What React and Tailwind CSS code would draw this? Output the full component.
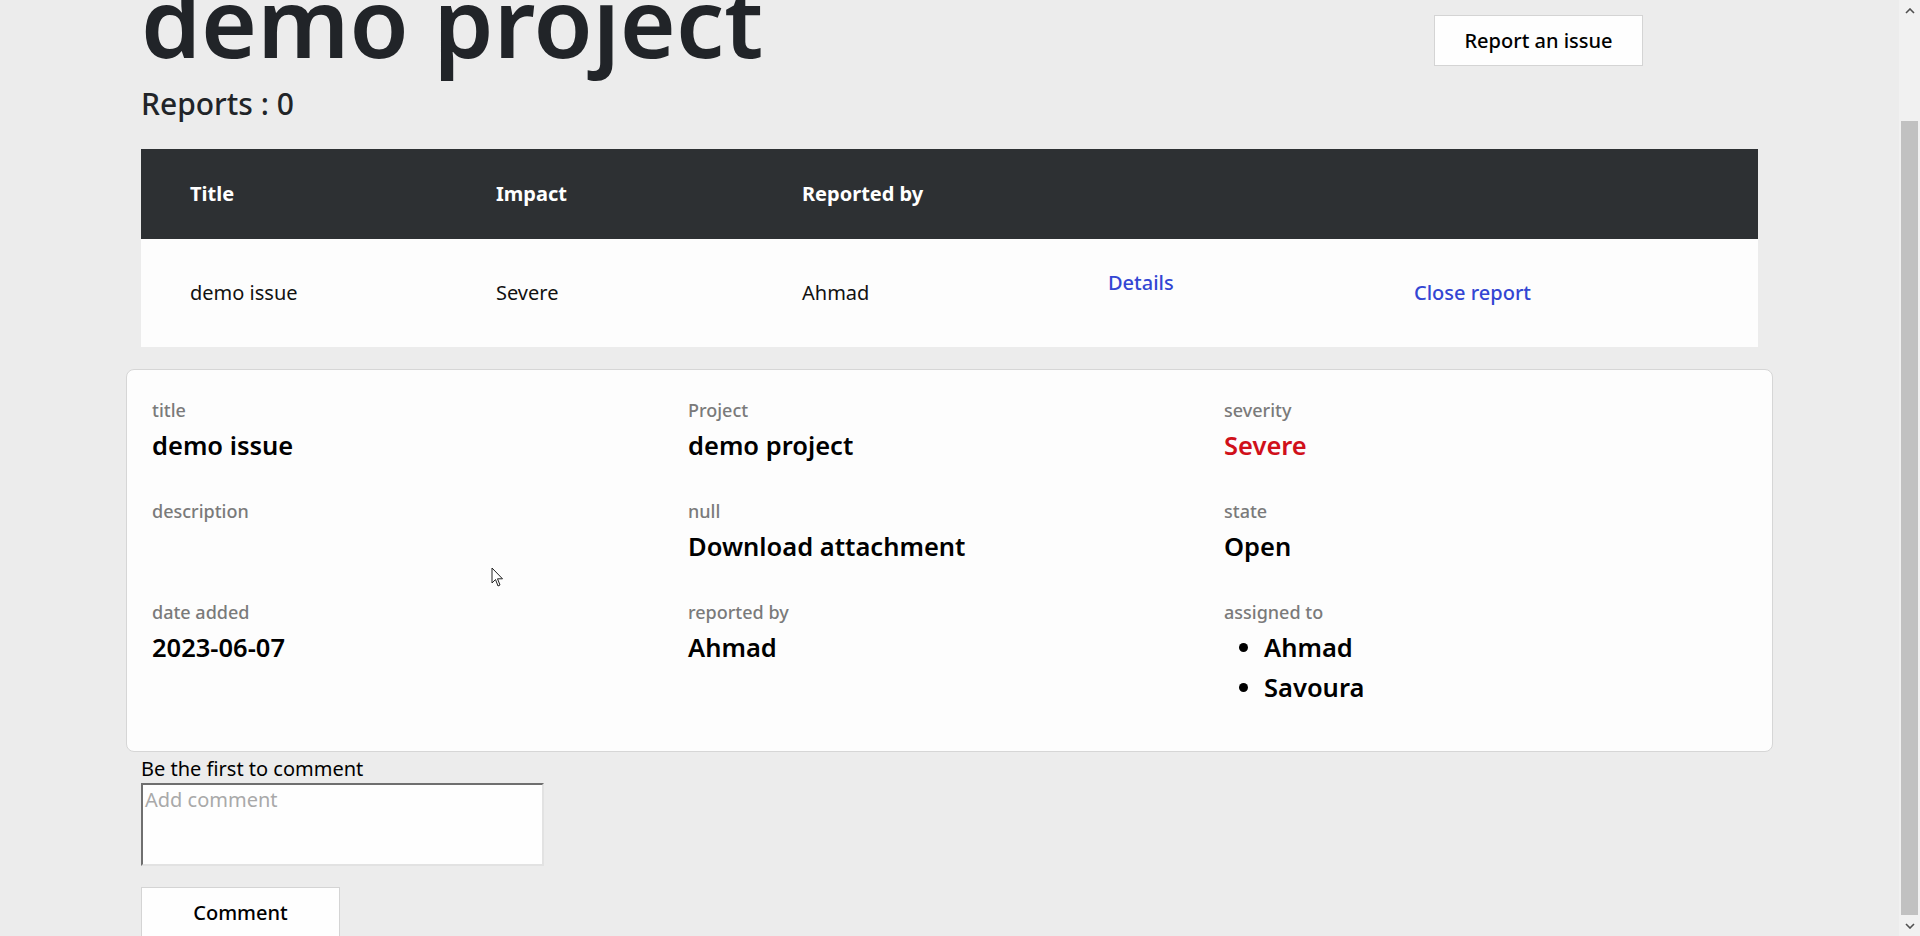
import React from "react";

const reports = [
  { title: "demo issue", impact: "Severe", reporter: "Ahmad" },
];

const Field = ({ label, children }) => (
  <div className="flex flex-col">
    <p className="text-[18px] leading-[27px] font-medium text-[#7a7a7a]">{label}</p>
    <div className="mt-[5px]">{children}</div>
  </div>
);

const Value = ({ children, color = "text-black" }) => (
  <p className={"text-[25.5px] leading-[32px] font-semibold " + color}>{children}</p>
);

const App = () => {
  return (
    <div
      className="flex h-[936px] overflow-hidden bg-[#ececec]"
      style={{ fontFamily: '"Noto Sans", "Open Sans", sans-serif' }}
    >
      <main className="flex-1 px-[141px] text-[#1f2328]">
        {/* Header */}
        <div className="flex items-start justify-between -mt-[24px]">
          <div className="flex flex-col">
            <h1 className="text-[96px] leading-[90px] font-semibold text-[#212428]">demo project</h1>
            <h2 className="mt-[20px] text-[30px] leading-[36px] font-medium text-[#212428]">Reports : 0</h2>
          </div>
          <button className="mt-[39px] mr-[115px] w-[209px] h-[51px] bg-[#fefefe] border border-[#d4d4d4] text-[20px] font-medium text-black">
            Report an issue
          </button>
        </div>

        {/* Reports table */}
        <div className="mt-[27px]">
          <div className="grid grid-cols-5 h-[90px] items-center pl-[49px] pr-[38px] bg-[#2d3033] text-white text-[20px] font-bold">
            <span>Title</span>
            <span>Impact</span>
            <span>Reported by</span>
            <span></span>
            <span></span>
          </div>
          {reports.map((r, i) => (
            <div key={i} className="grid grid-cols-5 h-[108px] items-center pl-[49px] pr-[38px] bg-[#fdfdfd] text-[20px] text-[#111]">
              <span>{r.title}</span>
              <span>{r.impact}</span>
              <span>{r.reporter}</span>
              <span className="mb-[20px] font-medium text-[#3346d3]">Details</span>
              <span className="font-medium text-[#3346d3]">Close report</span>
            </div>
          ))}
        </div>

        {/* Details card */}
        <div className="relative mt-[22px] -mx-[15px] bg-[#fdfdfd] border border-[#d6d6d6] rounded-lg pt-[27px] pb-[44px] pl-[25px]">
          <div className="grid grid-cols-[536px_536px_536px] gap-y-[37px]">
            <Field label="title"><Value>demo issue</Value></Field>
            <Field label="Project"><Value>demo project</Value></Field>
            <Field label="severity"><Value color="text-[#d0101a]">Severe</Value></Field>

            <Field label="description"><Value>&nbsp;</Value></Field>
            <Field label="null"><Value>Download attachment</Value></Field>
            <Field label="state"><Value>Open</Value></Field>

            <Field label="date added"><Value>2023-06-07</Value></Field>
            <Field label="reported by"><Value>Ahmad</Value></Field>
            <Field label="assigned to">
              <ul className="-mt-[4px] list-disc pl-[40px] text-[25.5px] leading-[40px] font-semibold text-black">
                <li>Ahmad</li>
                <li>Savoura</li>
              </ul>
            </Field>
          </div>

          {/* mouse pointer */}
          <svg className="absolute left-[364px] top-[197px]" width="13" height="21" viewBox="0 0 13 21">
            <path d="M1 1 L1 16 L4.5 12.5 L7 19 L9 18 L6.5 11.8 L11.5 11.8 Z" fill="#fff" stroke="#222" strokeWidth="1" strokeLinejoin="round" />
          </svg>
        </div>

        {/* Comments */}
        <p className="mt-[4px] text-[20px] leading-[26px] text-black">Be the first to comment</p>
        <textarea
          placeholder="Add comment"
          className="mt-px block w-[403px] h-[83px] resize-none bg-[#fefefe] px-[2px] py-0 text-[20px] text-black placeholder:text-[#a9a9a9] border-2 border-t-[#6f6f6f] border-l-[#6f6f6f] border-r-[#e2e2e2] border-b-[#e2e2e2] outline-none"
        ></textarea>
        <button className="mt-[21px] w-[199px] h-[51px] bg-[#fefefe] border border-[#d4d4d4] text-[20px] font-medium text-black">
          Comment
        </button>
      </main>

      {/* scrollbar */}
      <div className="w-[21px] h-full flex flex-col bg-[#f1f1f1]">
        <div className="h-[21px] flex items-center justify-center">
          <svg width="10" height="6" viewBox="0 0 10 6"><path d="M1 5 L5 1 L9 5" fill="none" stroke="#505050" strokeWidth="1.6" /></svg>
        </div>
        <div className="h-[100px]"></div>
        <div className="flex-1 mx-[2px] bg-[#c1c1c1]"></div>
        <div className="h-[21px] flex items-center justify-center">
          <svg width="10" height="6" viewBox="0 0 10 6"><path d="M1 1 L5 5 L9 1" fill="none" stroke="#505050" strokeWidth="1.6" /></svg>
        </div>
      </div>
    </div>
  );
};

export default App;
